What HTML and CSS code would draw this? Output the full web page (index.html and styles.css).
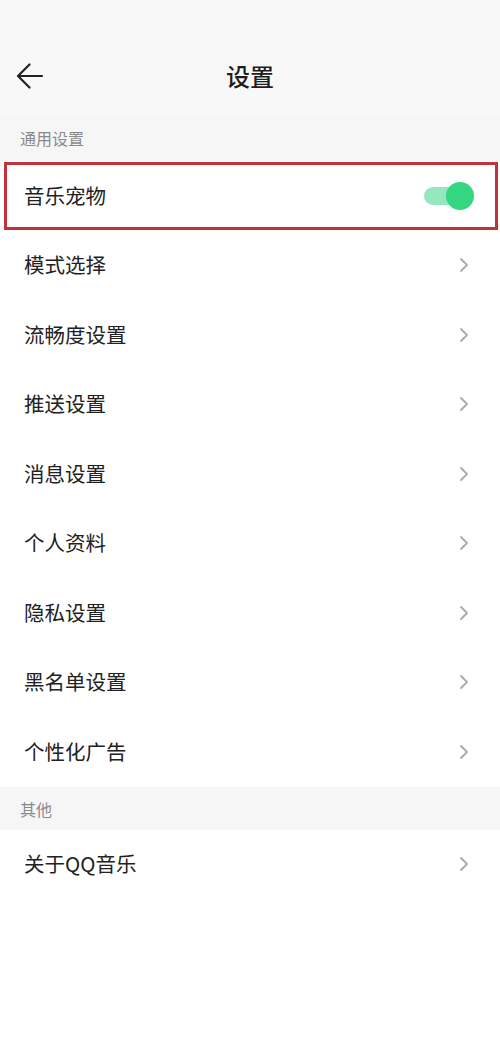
FILE: index.html
```html
<!DOCTYPE html>
<html lang="zh-CN">
<head>
<meta charset="utf-8">
<link rel="stylesheet" href="styles.css">
</head>
<body>
<div class="page">
  <header class="topbar">
    <svg class="back" width="28" height="26" viewBox="0 0 28 26"><path d="M26 13H2M13.5 1.5L2 13l11.5 11.5" fill="none" stroke="#222" stroke-width="2.2" stroke-linecap="round" stroke-linejoin="round"/></svg>
    <h1 class="title">设置</h1>
  </header>
  <div class="section">通用设置</div>
  <div class="row highlight">
    <span class="label">音乐宠物</span>
    <span class="toggle"><span class="track"></span><span class="knob"></span></span>
  </div>
  <div class="row"><span class="label">模式选择</span><svg class="chev" width="10" height="16" viewBox="0 0 10 16"><path d="M2 2l6 6-6 6" fill="none" stroke="#aaa" stroke-width="1.8" stroke-linecap="round" stroke-linejoin="round"/></svg></div>
  <div class="row"><span class="label">流畅度设置</span><svg class="chev" width="10" height="16" viewBox="0 0 10 16"><path d="M2 2l6 6-6 6" fill="none" stroke="#aaa" stroke-width="1.8" stroke-linecap="round" stroke-linejoin="round"/></svg></div>
  <div class="row"><span class="label">推送设置</span><svg class="chev" width="10" height="16" viewBox="0 0 10 16"><path d="M2 2l6 6-6 6" fill="none" stroke="#aaa" stroke-width="1.8" stroke-linecap="round" stroke-linejoin="round"/></svg></div>
  <div class="row"><span class="label">消息设置</span><svg class="chev" width="10" height="16" viewBox="0 0 10 16"><path d="M2 2l6 6-6 6" fill="none" stroke="#aaa" stroke-width="1.8" stroke-linecap="round" stroke-linejoin="round"/></svg></div>
  <div class="row"><span class="label">个人资料</span><svg class="chev" width="10" height="16" viewBox="0 0 10 16"><path d="M2 2l6 6-6 6" fill="none" stroke="#aaa" stroke-width="1.8" stroke-linecap="round" stroke-linejoin="round"/></svg></div>
  <div class="row"><span class="label">隐私设置</span><svg class="chev" width="10" height="16" viewBox="0 0 10 16"><path d="M2 2l6 6-6 6" fill="none" stroke="#aaa" stroke-width="1.8" stroke-linecap="round" stroke-linejoin="round"/></svg></div>
  <div class="row"><span class="label">黑名单设置</span><svg class="chev" width="10" height="16" viewBox="0 0 10 16"><path d="M2 2l6 6-6 6" fill="none" stroke="#aaa" stroke-width="1.8" stroke-linecap="round" stroke-linejoin="round"/></svg></div>
  <div class="row"><span class="label">个性化广告</span><svg class="chev" width="10" height="16" viewBox="0 0 10 16"><path d="M2 2l6 6-6 6" fill="none" stroke="#aaa" stroke-width="1.8" stroke-linecap="round" stroke-linejoin="round"/></svg></div>
  <div class="section small">其他</div>
  <div class="row"><span class="label">关于QQ音乐</span><svg class="chev" width="10" height="16" viewBox="0 0 10 16"><path d="M2 2l6 6-6 6" fill="none" stroke="#aaa" stroke-width="1.8" stroke-linecap="round" stroke-linejoin="round"/></svg></div>
</div>
</body>
</html>
```
FILE: styles.css
```css
html, body {
  margin: 0;
  padding: 0;
  background: #ffffff;
}
body {
  font-family: "Noto Sans CJK SC", "Noto Sans", sans-serif;
  color: #222;
}
.page {
  width: 500px;
  min-height: 1056px;
  background: #fff;
}
.topbar {
  height: 115px;
  background: #f8f8f8;
  position: relative;
  display: flex;
  align-items: flex-start;
  justify-content: center;
  box-sizing: border-box;
  padding-top: 59px;
}
.back {
  position: absolute;
  left: 16px;
  top: 63px;
}
.title {
  margin: 0;
  font-size: 24px;
  font-weight: 500;
  line-height: 34px;
  color: #1e1e1e;
}
.section {
  height: 46px;
  background: #f6f6f6;
  font-size: 16px;
  color: #8a8a8a;
  display: flex;
  align-items: center;
  padding-left: 20px;
  padding-bottom: 1px;
  box-sizing: border-box;
}
.section.small {
  height: 43px;
  padding-top: 2px;
  padding-bottom: 0;
}
.row {
  height: 69.5px;
  display: flex;
  align-items: center;
  justify-content: space-between;
  padding: 0 31px 2px 24px;
  box-sizing: border-box;
  position: relative;
}
.label {
  font-size: 20.5px;
  color: #222;
}
.chev {
  margin-top: 2px;
}
.highlight {
  padding-right: 26px;
}
.highlight::after {
  content: "";
  position: absolute;
  left: 4px;
  right: 2px;
  top: 1px;
  bottom: 1px;
  border: 3px solid #c2323d;
  box-sizing: border-box;
}
.toggle {
  position: relative;
  width: 50px;
  height: 28px;
  display: block;
  margin-top: 2px;
}
.track {
  position: absolute;
  left: 0;
  top: 5px;
  width: 42px;
  height: 18px;
  border-radius: 9px;
  background: #95e8be;
}
.knob {
  position: absolute;
  right: 0;
  top: 0;
  width: 28px;
  height: 28px;
  border-radius: 50%;
  background: #34d67f;
}
.chev {
  display: block;
}
```
